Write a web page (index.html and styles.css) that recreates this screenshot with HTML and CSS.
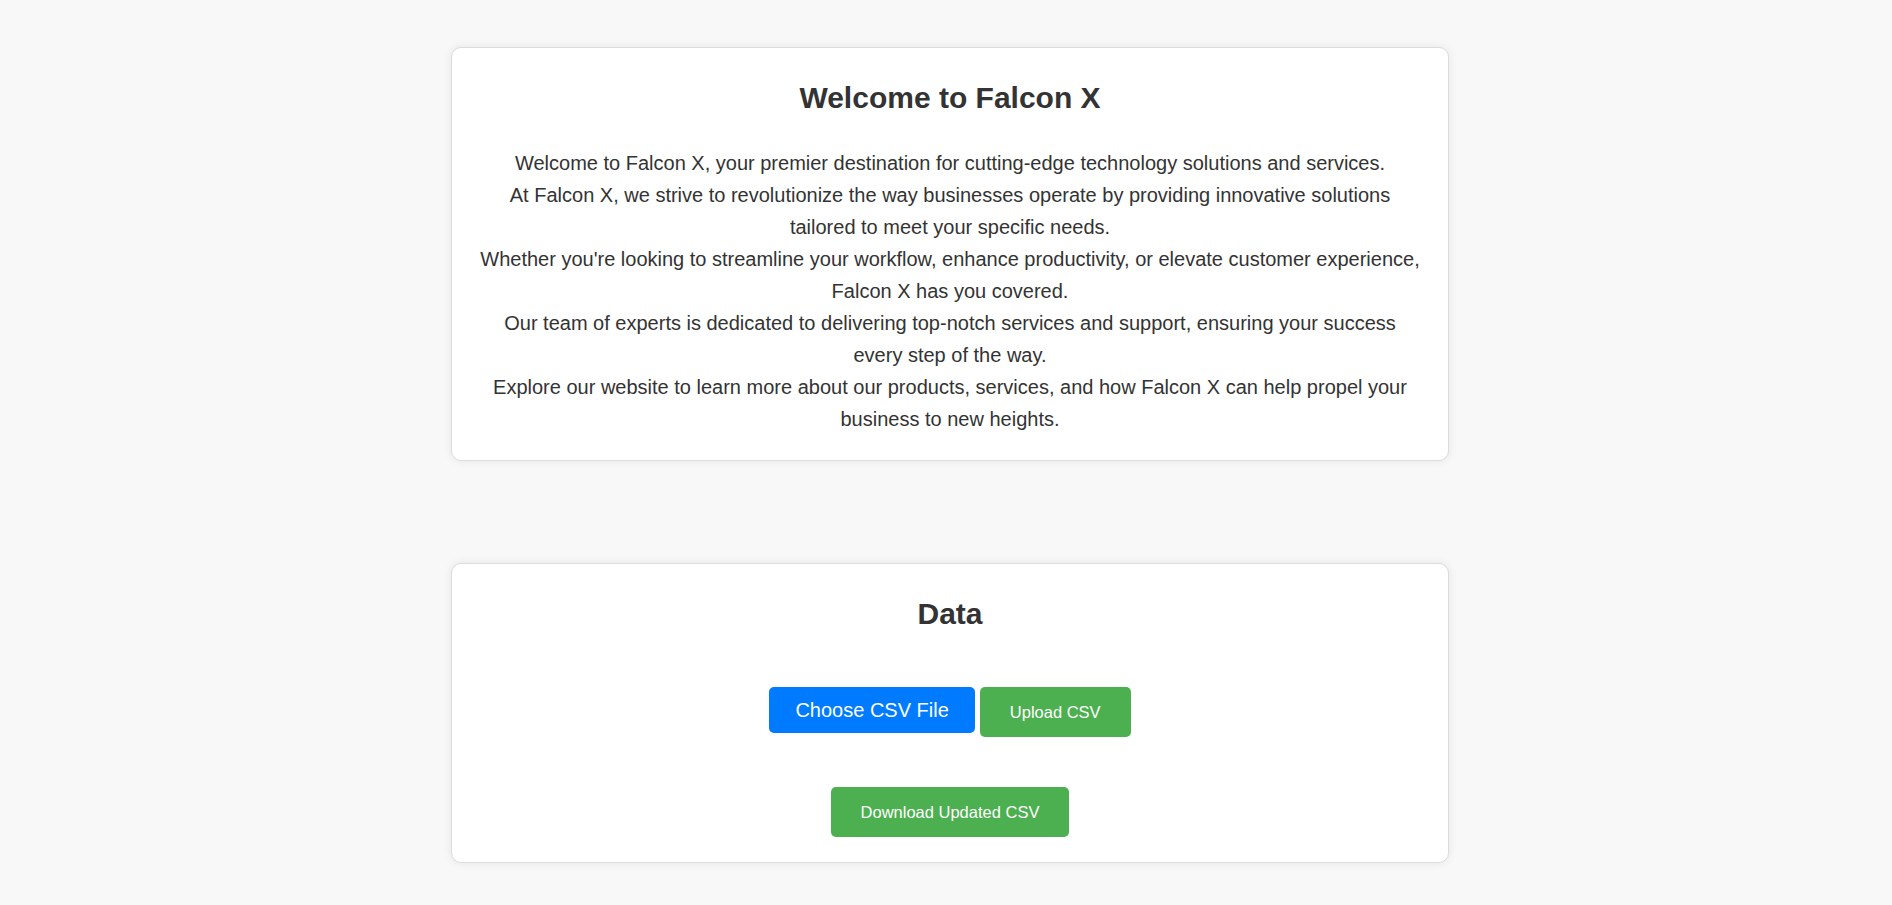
FILE: index.html
```html
<!DOCTYPE html>
<html lang="en">
<head>
<meta charset="utf-8">
<title>Falcon X</title>
<link rel="stylesheet" href="styles.css">
</head>
<body>
<div class="page">
  <section class="card intro">
    <h1 class="card-title">Welcome to Falcon X</h1>
    <p class="intro-text">Welcome to Falcon X, your premier destination for cutting-edge technology solutions and services.<br>At Falcon X, we strive to revolutionize the way businesses operate by providing innovative solutions<br>tailored to meet your specific needs.<br>Whether you're looking to streamline your workflow, enhance productivity, or elevate customer experience,<br>Falcon X has you covered.<br>Our team of experts is dedicated to delivering top-notch services and support, ensuring your success<br>every step of the way.<br>Explore our website to learn more about our products, services, and how Falcon X can help propel your<br>business to new heights.</p>
  </section>
  <section class="card data">
    <h1 class="card-title">Data</h1>
    <div class="upload-row">
      <label class="btn btn-choose">Choose CSV File</label>
      <button class="btn btn-green">Upload CSV</button>
    </div>
    <div class="download-row">
      <button class="btn btn-green">Download Updated CSV</button>
    </div>
  </section>
</div>
</body>
</html>
```
FILE: styles.css
```css
html, body {
  margin: 0;
  padding: 0;
  background: #f8f8f8;
  font-family: "Liberation Sans", Arial, sans-serif;
  color: #333;
}
.page {
  padding: 47px 0 40px 8px;
  display: flex;
  flex-direction: column;
  align-items: center;
  gap: 102px;
}
.card {
  width: 998px;
  box-sizing: border-box;
  background: #fff;
  border: 1px solid #dcdcdc;
  border-radius: 10px;
  box-shadow: 0 0 10px rgba(0, 0, 0, 0.08);
  padding: 20px;
  text-align: center;
}
.card-title {
  margin: 13px 0 32px;
  font-size: 30px;
  font-weight: bold;
  line-height: 34px;
  color: #333;
}
.intro-text {
  margin: 0 0 5px;
  font-size: 20px;
  line-height: 32px;
  color: #333;
}
.upload-row {
  display: flex;
  justify-content: center;
  align-items: flex-start;
  gap: 5px;
  margin-top: 56px;
}
.download-row {
  display: flex;
  justify-content: center;
  margin-top: 50px;
  margin-bottom: 5px;
}
.btn {
  border: none;
  border-radius: 5px;
  color: #fff;
  font-family: "Liberation Sans", Arial, sans-serif;
  cursor: pointer;
  display: inline-block;
}
.btn-choose {
  background: #007bff;
  font-size: 20px;
  line-height: 22px;
  padding: 12px 26px;
}
.btn-green {
  background: #4caf50;
  font-size: 16.5px;
  line-height: 20px;
  padding: 15px 30px;
}
```
